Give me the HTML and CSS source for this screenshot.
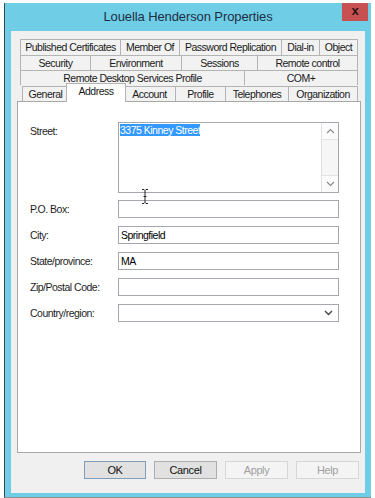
FILE: index.html
```html
<!DOCTYPE html>
<html>
  <head>
    <link rel="stylesheet" href="styles.css">
  </head>
  <body>
    <div class="window">
      <div class="titlebar">
        <span></span>
        <span class="title">Louella Henderson Properties</span>
        <button type="button" class="close-button">x</button>
      </div>
      <div class="client">
        <div class="tabs">
          <div class="tab-row">
            <div class="tab w-published">Published Certificates</div>
            <div class="tab w-member">Member Of</div>
            <div class="tab w-password">Password Replication</div>
            <div class="tab w-dialin">Dial-in</div>
            <div class="tab w-object">Object</div>
          </div>
          <div class="tab-row">
            <div class="tab w-security">Security</div>
            <div class="tab w-environment">Environment</div>
            <div class="tab w-sessions">Sessions</div>
            <div class="tab w-remote">Remote control</div>
          </div>
          <div class="tab-row">
            <div class="tab w-rdsp">Remote Desktop Services Profile</div>
            <div class="tab w-com">COM+</div>
          </div>
          <div class="tab-row tab-row-front">
            <div class="tab w-general">General</div>
            <div class="tab tab-selected w-address">Address</div>
            <div class="tab w-account">Account</div>
            <div class="tab w-profile">Profile</div>
            <div class="tab w-telephones">Telephones</div>
            <div class="tab w-organization">Organization</div>
          </div>
        </div>

        <div class="panel">
          <div class="address-form">
            <label class="field-label street-label">Street:</label>
            <div class="textbox multiline">
              <div class="textbox-text"><span class="selection">3375 Kinney Street</span></div>
              <div class="scrollbar">
                <div class="scroll-btn">
                  <svg width="9" height="6" viewBox="0 0 9 6"><path d="M1 5 L4.5 1.5 L8 5" fill="none" stroke="#8a8a8a" stroke-width="1.1"/></svg>
                </div>
                <div class="scroll-track"></div>
                <div class="scroll-btn">
                  <svg width="9" height="6" viewBox="0 0 9 6"><path d="M1 1 L4.5 4.5 L8 1" fill="none" stroke="#8a8a8a" stroke-width="1.1"/></svg>
                </div>
              </div>
            </div>

            <label class="field-label">P.O. Box:</label>
            <div class="textbox"></div>

            <label class="field-label">City:</label>
            <div class="textbox">Springfield</div>

            <label class="field-label">State/province:</label>
            <div class="textbox">MA</div>

            <label class="field-label">Zip/Postal Code:</label>
            <div class="textbox"></div>

            <label class="field-label">Country/region:</label>
            <div class="textbox combo">
              <svg width="9" height="6" viewBox="0 0 9 6"><path d="M1 1 L4.5 4.5 L8 1" fill="none" stroke="#444" stroke-width="1.4"/></svg>
            </div>
          </div>

          <svg class="ibeam" width="8" height="15" viewBox="0 0 8 15">
            <path d="M1 0.5 H3 L4 1.5 L5 0.5 H7 M4 1.5 V13.5 M1 14.5 H3 L4 13.5 L5 14.5 H7 M2.5 7.5 H5.5" fill="none" stroke="#222" stroke-width="1"/>
          </svg>
        </div>

        <div class="buttons">
          <button type="button" class="btn btn-default">OK</button>
          <button type="button" class="btn">Cancel</button>
          <button type="button" class="btn btn-disabled">Apply</button>
          <button type="button" class="btn btn-disabled">Help</button>
        </div>
      </div>
    </div>
  </body>
</html>
```

FILE: styles.css
```css
body {
  margin: 0;
  background: #fff;
  font: 10.5px "Liberation Sans", Arial, sans-serif;
  letter-spacing: -0.5px;
  color: #000;
}
.window {
  box-sizing: border-box;
  width: 367px;
  height: 495px;
  margin: 3px 0 0 4px;
  padding: 0 6px 4px 6px;
  background: #70cde6;
  border-left: 1px solid #3d4a52;
  border-bottom: 1px solid #8f8f8f;
  display: flex;
  flex-direction: column;
}
.titlebar {
  height: 28px;
  display: grid;
  grid-template-columns: 1fr auto 1fr;
  align-items: start;
}
.title {
  font: 13px "Liberation Sans", Arial, sans-serif;
  letter-spacing: -0.1px;
  color: #1b2f44;
  line-height: 28px;
}
.close-button {
  justify-self: end;
  margin-right: -3px;
  width: 26px;
  height: 18px;
  border: none;
  padding: 0 0 3px 0;
  background: #c75050;
  color: #2a1414;
  font: bold 13px "Liberation Sans", Arial, sans-serif;
  line-height: 15px;
}
.client {
  flex: 1;
  background: #f0f0f0;
  padding: 8px 4px 0 6px;
  display: flex;
  flex-direction: column;
}

/* tab strip */
.tabs {
  margin: 0 3px;
}
.tab-row {
  display: flex;
  height: 15px;
}
.tab-row:first-child {
  height: 16px;
}
.tab-row-front {
  height: 16px;
  align-items: flex-end;
  padding-left: 2px;
}
.tab {
  box-sizing: border-box;
  height: 100%;
  border: 1px solid #b4b4b4;
  border-bottom: none;
  margin-left: -1px;
  padding-top: 1px;
  background: #f2f2f2;
  text-align: center;
  line-height: 13px;
  white-space: nowrap;
  overflow: hidden;
  color: #1a1a1a;
}
.tab:first-child {
  margin-left: 0;
}
.tab-row-front .tab {
  height: 15px;
}
.tab-row-front .tab-selected {
  position: relative;
  z-index: 2;
  height: 19px;
  margin: 0 -2px -1px -3px;
  background: #fff;
}
.w-published { width: 101px; }
.w-member { width: 60px; }
.w-password { width: 103px; }
.w-dialin { width: 39px; }
.w-object { width: 39px; }
.w-security { width: 71px; }
.w-environment { width: 92px; }
.w-sessions { width: 77px; }
.w-remote { width: 101px; }
.w-rdsp { width: 225px; }
.w-com { width: 114px; }
.w-general { width: 47px; }
.w-address { width: 60px; }
.w-account { width: 53px; }
.w-profile { width: 51px; }
.w-telephones { width: 64px; }
.w-organization { width: 70px; }

/* page */
.panel {
  position: relative;
  box-sizing: border-box;
  height: 352px;
  background: #fff;
  border: 1px solid #a8a8a8;
  padding: 20px 0 0 12px;
}
.address-form {
  display: grid;
  grid-template-columns: 88px 221px;
  row-gap: 8px;
  align-items: center;
}
.field-label {
  color: #1e1e1e;
}
.street-label {
  align-self: start;
  margin-top: 3px;
}
.textbox {
  box-sizing: border-box;
  height: 18px;
  border: 1px solid #a5a7ae;
  background: #fff;
  padding-left: 2px;
  line-height: 16px;
}
.multiline {
  height: 71px;
  margin-bottom: -1px;
  padding: 0;
  display: flex;
}
.textbox-text {
  flex: 1;
  padding: 1px 0 0 1px;
  line-height: 12px;
}
.selection {
  background: #3399ff;
  color: #fff;
}
.scrollbar {
  width: 16px;
  border-left: 1px solid #e0e0e0;
  display: flex;
  flex-direction: column;
}
.scroll-btn {
  height: 16px;
  display: flex;
  align-items: center;
  justify-content: center;
  background: #fbfbfb;
}
.scroll-track {
  flex: 1;
  background: #f6f6f6;
  border-top: 1px solid #e4e4e4;
  border-bottom: 1px solid #e4e4e4;
}
.combo {
  display: flex;
  justify-content: flex-end;
  align-items: center;
  padding-right: 5px;
}
.ibeam {
  position: absolute;
  left: 123px;
  top: 87px;
}

/* dialog buttons */
.buttons {
  display: flex;
  justify-content: flex-end;
  gap: 8px;
  margin-top: 8px;
  padding-right: 2px;
}
.btn {
  box-sizing: border-box;
  width: 63px;
  height: 18px;
  padding: 0;
  border: 1px solid #adadad;
  background: #e1e1e1;
  font: 11px "Liberation Sans", Arial, sans-serif;
  letter-spacing: -0.4px;
  color: #111;
}
.btn-default {
  border-color: #7f9db9;
  width: 62px;
}
.btn-disabled {
  background: #f4f4f4;
  border-color: #d6d6d6;
  color: #a0a0a0;
}
```
